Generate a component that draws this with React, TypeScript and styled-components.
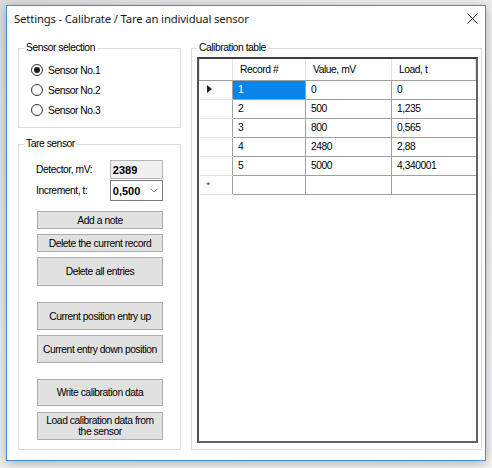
import { createGlobalStyle, styled } from "styled-components";

const GlobalStyle = createGlobalStyle`
  html, body {
    margin: 0;
    padding: 0;
    background: #e9e9e9;
  }
  * {
    box-sizing: border-box;
  }
`;

const Page = styled.div`
  width: 492px;
  height: 468px;
  padding: 5px 0 0 6px;
  background: linear-gradient(135deg, #dcdcdc 0%, #eeeeee 40%, #f2f2f2 100%);
`;

const Window = styled.div`
  width: 480px;
  height: 456px;
  border: 1px solid #3c8fd9;
  background: #ffffff;
  box-shadow: 0 2px 10px rgba(0, 0, 0, 0.28);
  display: flex;
  flex-direction: column;
  font-family: "Liberation Sans", Arial, sans-serif;
  font-size: 10px;
  letter-spacing: -0.45px;
  color: #000;
`;

const TitleBar = styled.div`
  height: 25px;
  flex: none;
  display: flex;
  align-items: center;
  justify-content: space-between;
  padding: 0 6px 0 7px;
`;

const Title = styled.span`
  font-family: "Noto Sans", "Liberation Sans", sans-serif;
  font-size: 11.3px;
  letter-spacing: -0.15px;
  color: #1a1a1a;
`;

const CloseButton = styled.span`
  width: 14px;
  height: 14px;
  display: flex;
  align-items: center;
  justify-content: center;
`;

const Body = styled.div`
  flex: 1;
  display: flex;
  gap: 10px;
  padding: 11px 3px 10px 11px;
`;

const LeftColumn = styled.div`
  width: 163px;
  display: flex;
  flex-direction: column;
  gap: 10px;
`;

const Group = styled.fieldset<{ $grow?: boolean }>`
  margin: 0;
  padding: 0;
  border: 1px solid #dcdcdc;
  min-width: 0;
  display: flex;
  flex-direction: column;
  ${(p) => (p.$grow ? "flex: 1;" : "")}
`;

const Legend = styled.legend`
  margin-left: 5px;
  padding: 0 2px;
  line-height: 12px;
  font-size: 10.3px;
`;

const RadioList = styled.div`
  padding: 6px 0 7px 12px;
  display: flex;
  flex-direction: column;
`;

const RadioRow = styled.label`
  height: 20px;
  display: flex;
  align-items: center;
  gap: 5px;
  font-size: 10.3px;
`;

const RadioCircle = styled.span<{ $checked?: boolean }>`
  width: 12px;
  height: 12px;
  border-radius: 50%;
  border: 1px solid #333333;
  background: #fff;
  display: flex;
  align-items: center;
  justify-content: center;

  &::after {
    content: "";
    width: 6px;
    height: 6px;
    border-radius: 50%;
    background: ${(p) => (p.$checked ? "#1a1a1a" : "transparent")};
  }
`;

const TareBody = styled.div`
  padding: 10px 17px 7px 17px;
  display: flex;
  flex-direction: column;
`;

const FieldRow = styled.div`
  display: flex;
  align-items: center;
  margin-bottom: 1px;
`;

const FieldLabel = styled.span`
  width: 75px;
  font-size: 10.3px;
`;

const ReadOnlyBox = styled.div`
  width: 54px;
  height: 19px;
  border: 1px solid #b4b4b4;
  background: #f0f0f0;
  font-weight: bold;
  font-size: 11px;
  letter-spacing: 0;
  padding-left: 2px;
  display: flex;
  align-items: center;
`;

const Combo = styled.div`
  width: 54px;
  height: 21px;
  border: 1px solid #7a7a7a;
  background: #fff;
  font-weight: bold;
  font-size: 11px;
  letter-spacing: 0;
  padding: 0 4px 0 2px;
  display: flex;
  align-items: center;
  justify-content: space-between;
`;

const Buttons = styled.div`
  margin-top: 9px;
  padding-left: 1px;
  display: flex;
  flex-direction: column;
`;

const Button = styled.button<{ $h: number; $gap: number }>`
  width: 126px;
  height: ${(p) => p.$h}px;
  margin: ${(p) => p.$gap}px 0 0 0;
  padding: 0 2px;
  border: 1px solid #adadad;
  background: #e1e1e1;
  font-family: inherit;
  font-size: 10.3px;
  letter-spacing: -0.45px;
  line-height: 11px;
  color: #000;
  text-align: center;
`;

const GridWrap = styled.div`
  flex: 1;
  margin: 3px 3px 6px 5px;
  border: 2px solid #646464;
  border-top-color: #3c3c3c;
  border-left-color: #505050;
  background: #fff;
  overflow: hidden;
`;

const Table = styled.table`
  width: 100%;
  border-collapse: collapse;
  table-layout: fixed;
`;

const HeadCell = styled.th<{ $w?: number }>`
  ${(p) => (p.$w ? `width: ${p.$w}px;` : "")}
  height: 21px;
  padding: 0 0 0 7px;
  border: 1px solid #e2e2e2;
  border-top: none;
  border-bottom-color: #a0a0a0;
  font-weight: normal;
  text-align: left;
  font-size: 10.3px;
`;

const RowHead = styled.td`
  height: 19px;
  border-right: 1px solid #a0a0a0;
  border-bottom: 1px solid #e2e2e2;
  padding-left: 7px;
  font-size: 10px;
`;

const Cell = styled.td<{ $selected?: boolean }>`
  height: 19px;
  padding: 0 0 0 5px;
  border: 1px solid #a0a0a0;
  background: ${(p) => (p.$selected ? "#0a84e8" : "#fff")};
  color: ${(p) => (p.$selected ? "#fff" : "#000")};
  font-size: 10.3px;
  &:last-child {
    border-right: none;
  }
`;

const NewRowMark = styled.span`
  font-size: 9px;
  color: #333;
`;

const records = [
  { id: "1", value: "0", load: "0" },
  { id: "2", value: "500", load: "1,235" },
  { id: "3", value: "800", load: "0,565" },
  { id: "4", value: "2480", load: "2,88" },
  { id: "5", value: "5000", load: "4,340001" },
];

const actions = [
  { label: "Add a note", h: 18, gap: 0 },
  { label: "Delete the current record", h: 18, gap: 5 },
  { label: "Delete all entries", h: 29, gap: 5 },
  { label: "Current position entry up", h: 28, gap: 16 },
  { label: "Current entry down position", h: 28, gap: 5 },
  { label: "Write calibration data", h: 27, gap: 16 },
  { label: "Load calibration data from the sensor", h: 28, gap: 6 },
];

function CloseIcon() {
  return (
    <svg width="11" height="11" viewBox="0 0 11 11">
      <path d="M0.5 0.5 L10.5 10.5 M10.5 0.5 L0.5 10.5" stroke="#222" strokeWidth="1" />
    </svg>
  );
}

function RowArrow() {
  return (
    <svg width="5" height="8" viewBox="0 0 5 8">
      <path d="M0 0 L5 4 L0 8 Z" fill="#222" />
    </svg>
  );
}

function Chevron() {
  return (
    <svg width="8" height="5" viewBox="0 0 8 5">
      <path d="M0.5 0.5 L4 4 L7.5 0.5" stroke="#888" fill="none" />
    </svg>
  );
}

export default function App() {
  return (
    <Page>
      <GlobalStyle />
      <Window>
        <TitleBar>
          <Title>Settings - Calibrate / Tare an individual sensor</Title>
          <CloseButton>
            <CloseIcon />
          </CloseButton>
        </TitleBar>
        <Body>
          <LeftColumn>
            <Group>
              <Legend>Sensor selection</Legend>
              <RadioList>
                {["Sensor No.1", "Sensor No.2", "Sensor No.3"].map((s, i) => (
                  <RadioRow key={s}>
                    <RadioCircle $checked={i === 0} />
                    {s}
                  </RadioRow>
                ))}
              </RadioList>
            </Group>
            <Group $grow>
              <Legend>Tare sensor</Legend>
              <TareBody>
                <FieldRow>
                  <FieldLabel>Detector, mV:</FieldLabel>
                  <ReadOnlyBox>2389</ReadOnlyBox>
                </FieldRow>
                <FieldRow>
                  <FieldLabel>Increment, t:</FieldLabel>
                  <Combo>
                    0,500
                    <Chevron />
                  </Combo>
                </FieldRow>
                <Buttons>
                  {actions.map((a) => (
                    <Button key={a.label} $h={a.h} $gap={a.gap}>
                      {a.label}
                    </Button>
                  ))}
                </Buttons>
              </TareBody>
            </Group>
          </LeftColumn>
          <Group $grow>
            <Legend>Calibration table</Legend>
            <GridWrap>
              <Table>
                <thead>
                  <tr>
                    <HeadCell $w={33} />
                    <HeadCell $w={73}>Record #</HeadCell>
                    <HeadCell $w={86}>Value, mV</HeadCell>
                    <HeadCell>Load, t</HeadCell>
                  </tr>
                </thead>
                <tbody>
                  {records.map((r, i) => (
                    <tr key={r.id}>
                      <RowHead>{i === 0 ? <RowArrow /> : null}</RowHead>
                      <Cell $selected={i === 0}>{r.id}</Cell>
                      <Cell>{r.value}</Cell>
                      <Cell>{r.load}</Cell>
                    </tr>
                  ))}
                  <tr>
                    <RowHead>
                      <NewRowMark>*</NewRowMark>
                    </RowHead>
                    <Cell />
                    <Cell />
                    <Cell />
                  </tr>
                </tbody>
              </Table>
            </GridWrap>
          </Group>
        </Body>
      </Window>
    </Page>
  );
}
